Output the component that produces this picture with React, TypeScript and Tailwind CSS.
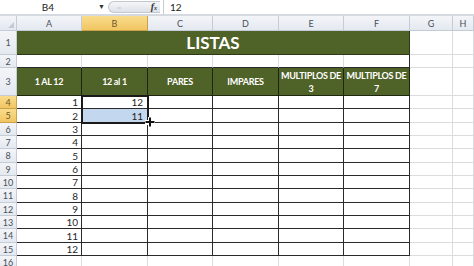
import React from "react";

const font = { fontFamily: "Lato, 'Open Sans', 'Liberation Sans', sans-serif" };

const light = "border-r border-b border-[#dadcdf]";
const dark = "border-r border-b border-[#2a2a2a]";

function RowHead({ n, sel, h }: { n: number | string; sel?: boolean; h: string }) {
  return (
    <div
      className={`${h} flex items-center justify-center border-r border-b text-[9px] leading-none ${
        sel
          ? "bg-gradient-to-b from-[#f9dc8c] to-[#f2c561] border-[#c9a24a] text-[#6b5a2a]"
          : "bg-gradient-to-b from-[#f3f5f8] to-[#e4e9f0] border-[#c6ccd6] text-[#4a4f58]"
      }`}
    >
      {n}
    </div>
  );
}

function DataRow({ n, h, a, b, sel, blue }: { n: number; h: string; a: number; b?: number; sel?: boolean; blue?: boolean }) {
  return (
    <>
      <RowHead n={n} sel={sel} h={h} />
      <div className={`${h} ${dark} flex items-center justify-end pr-[3px] text-[10px] leading-none text-[#1f1f1f]`}>{a}</div>
      <div
        className={`${h} ${dark} flex items-center justify-end pr-[4px] text-[10px] leading-none text-[#1f1f1f] ${
          blue ? "bg-[#c3d7ef]" : "bg-white"
        }`}
      >
        {b ?? ""}
      </div>
      <div className={`${h} ${dark}`} />
      <div className={`${h} ${dark}`} />
      <div className={`${h} ${dark}`} />
      <div className={`${h} ${dark}`} />
      <div className={`${h} ${light}`} />
      <div className={`${h} ${light}`} />
    </>
  );
}

const colHeads = ["A", "B", "C", "D", "E", "F", "G", "H"];

export default function App() {
  const rows: { n: number; h: string; a: number; b?: number; sel?: boolean; blue?: boolean }[] = [
    { n: 4, h: "h-[13px]", a: 1, b: 12, sel: true },
    { n: 5, h: "h-[14px]", a: 2, b: 11, sel: true, blue: true },
    { n: 6, h: "h-[13px]", a: 3 },
    { n: 7, h: "h-[13px]", a: 4 },
    { n: 8, h: "h-[14px]", a: 5 },
    { n: 9, h: "h-[13px]", a: 6 },
    { n: 10, h: "h-[13px]", a: 7 },
    { n: 11, h: "h-[14px]", a: 8 },
    { n: 12, h: "h-[13px]", a: 9 },
    { n: 13, h: "h-[13px]", a: 10 },
    { n: 14, h: "h-[14px]", a: 11 },
    { n: 15, h: "h-[13px]", a: 12 },
  ];

  const heads: React.ReactNode[] = [
    "1 AL 12",
    "12 al 1",
    "PARES",
    "IMPARES",
    <>
      MULTIPLOS DE
      <br />3
    </>,
    <>
      MULTIPLOS DE
      <br />7
    </>,
  ];

  return (
    <div className="w-[474px] h-[266px] overflow-hidden bg-white" style={font}>
      {/* formula bar */}
      <div className="h-[16px] flex flex-col">
        <div className="h-[14px] flex items-center bg-white">
          <div className="w-[106px] h-full flex items-center relative">
            <span className="w-[96px] text-center text-[10px] leading-none text-[#222]">B4</span>
            <span className="absolute left-[98px] top-[3px] text-[7px] leading-none text-[#333]">▼</span>
          </div>
          <div className="w-[57px] h-full flex items-center">
            <div className="h-[12px] w-[52px] ml-[2px] rounded-l-full border border-r-0 border-[#c2c8d0] bg-gradient-to-b from-[#f4f6f8] to-[#dde2e9] flex items-center justify-between pl-[8px] pr-[3px]">
              <span className="text-[8px] leading-none text-[#c6cbd2]">=</span>
              <span className="text-[10px] leading-none italic font-bold text-[#333]" style={{ fontFamily: "'Liberation Serif', serif" }}>
                f<span className="text-[6px]">x</span>
              </span>
            </div>
          </div>
          <div className="w-px h-full bg-[#c6ccd4]" />
          <span className="ml-[6px] text-[10px] leading-none text-[#222]">12</span>
        </div>
        <div className="h-[2px] bg-[#d5dae1]" />
      </div>

      {/* sheet */}
      <div className="relative">
        <div className="grid grid-cols-[17px_65px_66px_65px_66px_65px_66px_43px_21px]">
          {/* column headers */}
          <div className="h-[15px] border-r border-b border-[#c6ccd6] bg-gradient-to-b from-[#f3f5f8] to-[#e4e9f0] relative">
            <div className="absolute right-[2px] bottom-[2px] w-0 h-0 border-l-[6px] border-l-transparent border-b-[6px] border-b-[#c4cad3]" />
          </div>
          {colHeads.map((c) => (
            <div
              key={c}
              className={`h-[15px] flex items-center justify-center border-r border-b text-[9px] leading-none ${
                c === "B"
                  ? "bg-gradient-to-b from-[#f9dc8c] to-[#f2c561] border-[#c9a24a] text-[#6b5a2a]"
                  : "bg-gradient-to-b from-[#f3f5f8] to-[#e4e9f0] border-[#c6ccd6] text-[#4a4f58]"
              }`}
            >
              {c}
            </div>
          ))}

          {/* row 1 */}
          <RowHead n={1} h="h-[24px]" />
          <div className="col-span-6 h-[24px] bg-[#4f6228] border-r border-b border-[#2e3a17] flex items-center justify-center text-white font-bold text-[17px] leading-none">
            LISTAS
          </div>
          <div className={`h-[24px] ${light}`} />
          <div className={`h-[24px] ${light}`} />

          {/* row 2 */}
          <RowHead n={2} h="h-[13px]" />
          {[0, 1, 2, 3, 4, 5].map((i) => (
            <div key={i} className={`h-[13px] ${i === 5 ? "border-r border-[#2a2a2a]" : "border-r border-[#dadcdf]"} border-b border-b-[#2a2a2a]`} />
          ))}
          <div className={`h-[13px] ${light}`} />
          <div className={`h-[13px] ${light}`} />

          {/* row 3 */}
          <RowHead n={3} h="h-[28px]" />
          {heads.map((t, i) => (
            <div
              key={i}
              className="h-[28px] bg-[#4f6228] border-r border-b border-[#1e2610] flex items-center justify-center text-center text-white font-bold text-[9px] leading-[13px] tracking-[-0.3px] whitespace-nowrap"
            >
              <span>{t}</span>
            </div>
          ))}
          <div className={`h-[28px] ${light}`} />
          <div className={`h-[28px] ${light}`} />

          {rows.map((r) => (
            <DataRow key={r.n} {...r} />
          ))}

          {/* row 16 */}
          <RowHead n={16} h="h-[14px]" />
          {[0, 1, 2, 3, 4, 5, 6, 7].map((i) => (
            <div key={i} className={`h-[14px] ${light}`} />
          ))}
        </div>

        {/* selection */}
        <div className="absolute left-[81px] top-[79px] w-[68px] h-[29px] border-2 border-[#1a1a1a] pointer-events-none" />
        <div className="absolute left-[145px] top-[104px] w-[5px] h-[5px] bg-[#1a1a1a] border border-white" />
        <svg className="absolute left-[144px] top-[100px]" width="12" height="12" viewBox="0 0 12 12">
          <path d="M6 1 V11 M1 6 H11" stroke="#fff" strokeWidth="4" />
          <path d="M6 1.5 V10.5 M1.5 6 H10.5" stroke="#111" strokeWidth="2" />
        </svg>
      </div>
    </div>
  );
}
